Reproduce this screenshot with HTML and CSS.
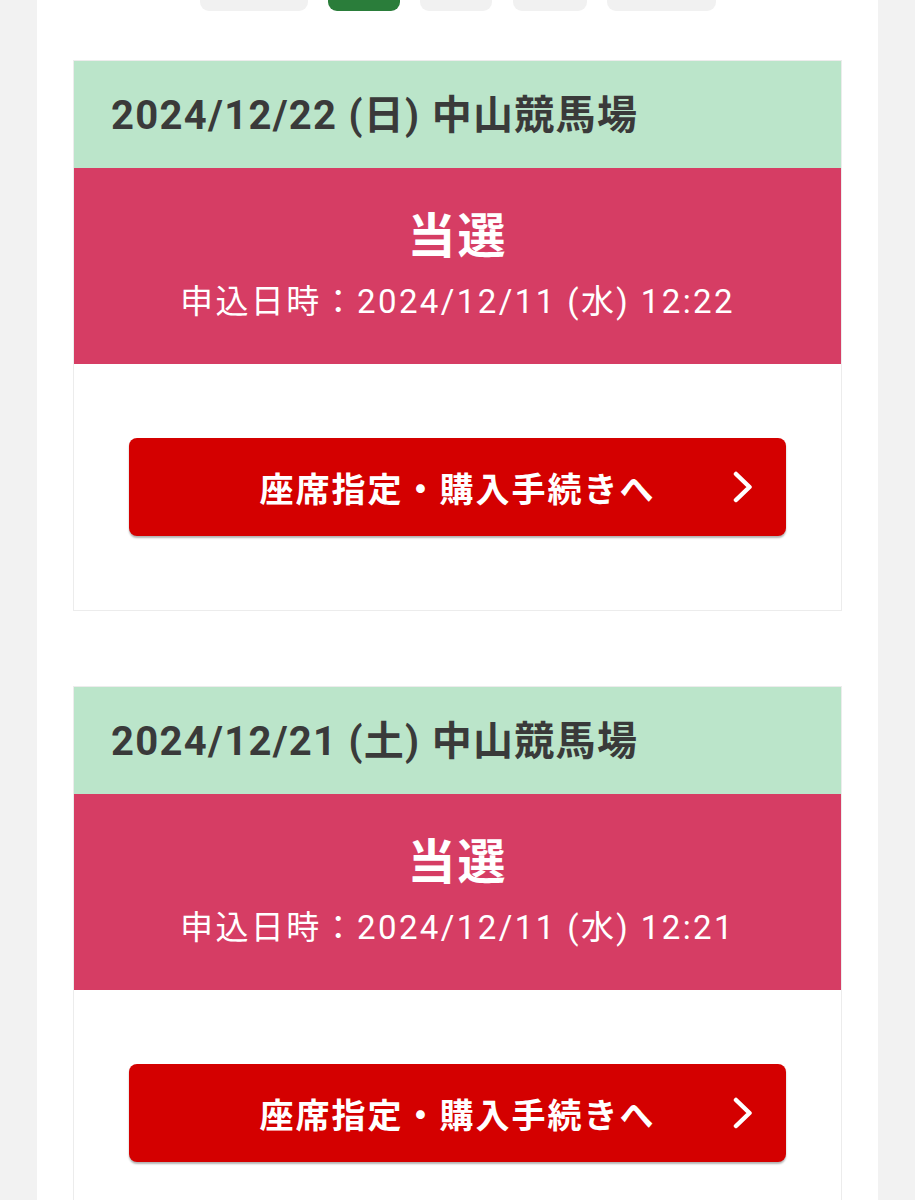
FILE: index.html
```html
<!DOCTYPE html>
<html lang="ja">
<head>
<meta charset="utf-8">
<title>抽選結果</title>
<link rel="stylesheet" href="styles.css">
</head>
<body>
<div class="page">
  <nav class="tabs">
    <div class="tab tab-w1"></div>
    <div class="tab tab-w2 active"></div>
    <div class="tab tab-w2"></div>
    <div class="tab tab-w3"></div>
    <div class="tab tab-w4"></div>
  </nav>

  <section class="card">
    <h2 class="card-head">2024/12/22 (日) 中山競馬場</h2>
    <div class="result">
      <p class="result-title">当選</p>
      <p class="result-date">申込日時：2024/12/11 (水) 12:22</p>
    </div>
    <div class="card-body">
      <a class="btn" href="#">
        <span class="btn-label">座席指定・購入手続きへ</span>
        <svg class="btn-icon" width="20" height="32" viewBox="0 0 20 32"><polyline points="3,3 16.5,16 3,29" fill="none" stroke="#fff" stroke-width="4.5" stroke-linecap="round" stroke-linejoin="round"/></svg>
      </a>
    </div>
  </section>

  <section class="card">
    <h2 class="card-head">2024/12/21 (土) 中山競馬場</h2>
    <div class="result">
      <p class="result-title">当選</p>
      <p class="result-date">申込日時：2024/12/11 (水) 12:21</p>
    </div>
    <div class="card-body">
      <a class="btn" href="#">
        <span class="btn-label">座席指定・購入手続きへ</span>
        <svg class="btn-icon" width="20" height="32" viewBox="0 0 20 32"><polyline points="3,3 16.5,16 3,29" fill="none" stroke="#fff" stroke-width="4.5" stroke-linecap="round" stroke-linejoin="round"/></svg>
      </a>
    </div>
  </section>
</div>
</body>
</html>
```
FILE: styles.css
```css
html, body {
  margin: 0;
  padding: 0;
  background: #f2f2f2;
  font-family: Roboto, "Noto Sans CJK JP", sans-serif;
}

.page {
  margin: 0 37px;
  background: #ffffff;
  padding: 0 36px 60px;
  min-height: 1300px;
}

.tabs {
  display: flex;
  justify-content: center;
  gap: 20px;
  height: 11px;
  margin-bottom: 49px;
}

.tab {
  height: 11px;
  background: #f1f1f1;
  border-radius: 0 0 9px 9px;
}
.tab-w1 { width: 108px; }
.tab-w2 { width: 72px; }
.tab-w3 { width: 74px; margin-left: 1px; }
.tab-w4 { width: 109px; }
.tab.active { background: #2a7d3a; }

.card {
  border: 1px solid #ececec;
  margin-bottom: 75px;
}

.card-head {
  margin: 0;
  height: 107px;
  box-sizing: border-box;
  display: flex;
  align-items: center;
  padding: 0 0 6px 37px;
  background: #bbe5ca;
  color: #3a3a3a;
  font-size: 40px;
  font-weight: 700;
  letter-spacing: 1.3px;
}

.result {
  background: #d63d64;
  color: #ffffff;
  text-align: center;
  padding: 39px 0 42px;
}

.result p { margin: 0; }

.result-title {
  font-size: 48px;
  line-height: 60px;
  font-weight: 700;
  letter-spacing: 2px;
}

.result-date {
  margin-top: 15px !important;
  font-size: 33px;
  line-height: 40px;
  letter-spacing: 2.4px;
}

.card-body {
  padding: 74px 55px 74px 55px;
  background: #fff;
}

.btn {
  display: grid;
  grid-template-columns: 1fr auto 1fr;
  align-items: center;
  height: 98px;
  background: #d40000;
  border-radius: 8px;
  box-shadow: 0 2px 2px rgba(0, 0, 0, 0.3);
  color: #fff;
  text-decoration: none;
}

.btn-label {
  grid-column: 2;
  font-family: "Noto Sans CJK JP", sans-serif;
  font-size: 34px;
  font-weight: 700;
  letter-spacing: 2px;
}

.btn-icon {
  grid-column: 3;
  justify-self: end;
  margin-right: 33px;
}
```
